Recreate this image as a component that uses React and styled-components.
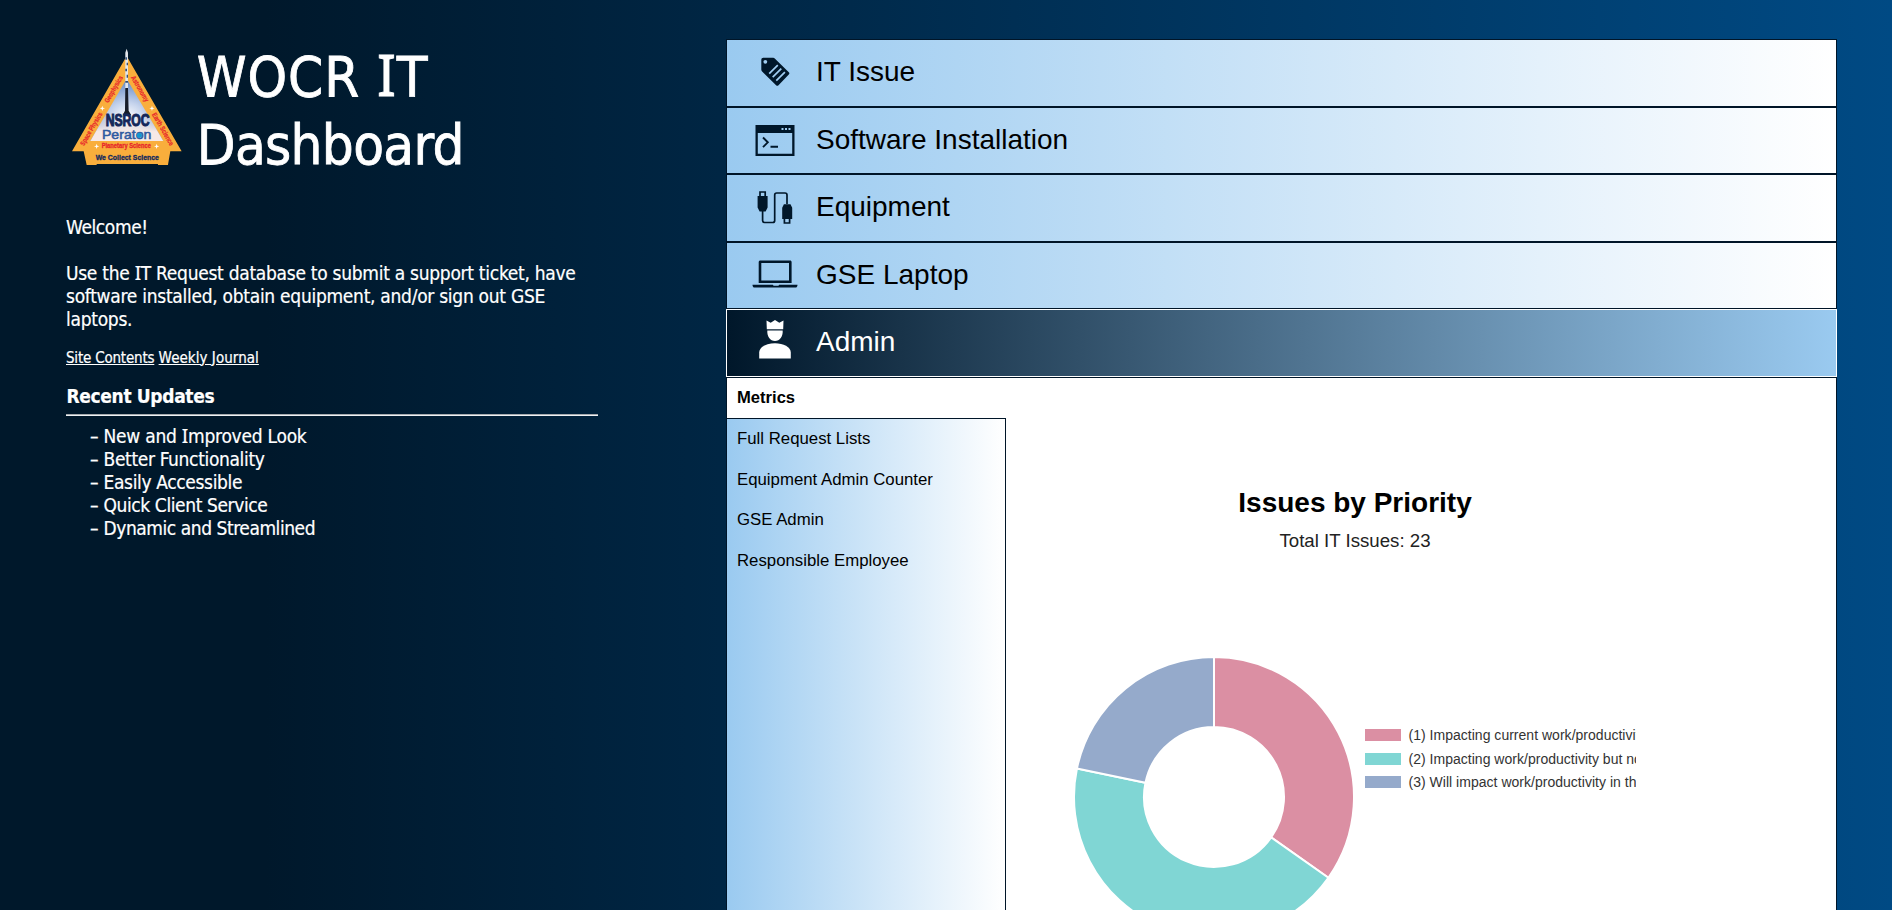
import React from 'react';
import styled, { createGlobalStyle } from 'styled-components';

const NAVY = '#00172a';
const SKY = '#9acaf0';

const GlobalStyle = createGlobalStyle`
  * { box-sizing: border-box; }
  body { margin: 0; overflow: hidden; background: ${NAVY}; }
`;

const Page = styled.div`
  display: flex;
  height: 910px;
  overflow: hidden;
  background: linear-gradient(to right, #00182b 14%, #004a84 100%);
  font-family: 'Liberation Sans', Arial, sans-serif;
`;

const Intro = styled.aside`
  width: 532px;
  margin-left: 66px;
  padding-top: 43px;
  color: #fff;
  font: 19px/23px 'DejaVu Sans Condensed', Tahoma, sans-serif;
  -webkit-text-stroke: 0.2px #fff;
`;

const Header = styled.header`
  display: flex;
  align-items: flex-start;
  height: 136px;
  margin-bottom: 37px;
`;

const Logo = styled.svg`
  flex: none;
  width: 113.3px;
  height: 122px;
  margin: 3px 13.5px 0 4px;
  -webkit-text-stroke: 0;
`;

const Title = styled.h1`
  margin: 0;
  font-size: 56px;
  line-height: 68px;
  font-weight: 400;
  -webkit-text-stroke: 0.8px #fff;
`;

const TitleLine = styled.span`
  display: block;
  white-space: nowrap;
  letter-spacing: ${(p) => p.$tracking}px;
`;

const BarredI = styled.span`
  font-family: 'Noto Sans', Tahoma, sans-serif;
  line-height: 0;
`;

const Paragraph = styled.p`
  margin: 0 0 ${(p) => p.$gap}px;
  letter-spacing: ${(p) => p.$tracking}px;
`;

const Links = styled.nav`
  height: 18px;
  margin-bottom: 18px;
  font-size: 15px;
  line-height: 18px;
`;

const TextLink = styled.a`
  color: #fff;
  letter-spacing: ${(p) => p.$tracking}px;
  text-decoration: underline;
`;

const SectionTitle = styled.h2`
  margin: 0;
  padding: 0 0 6px 0.5px;
  font-size: 19px;
  line-height: 23px;
  letter-spacing: -0.35px;
  border-bottom: 1px solid #a5a9ad;
`;

const Updates = styled.ul`
  margin: 0;
  padding: 9px 0 0 24px;
  list-style: none;
  border-top: 1px solid #eef1f4;
`;

const Update = styled.li`
  display: flex;
  letter-spacing: ${(p) => p.$tracking}px;
  white-space: nowrap;
`;

const Dash = styled.span`
  width: 13.5px;
`;

const Main = styled.main`
  display: flex;
  flex-direction: column;
  width: 1111px;
  margin: 39px 0 0 128px;
`;

const MenuItem = styled.button`
  display: flex;
  flex: none;
  align-items: center;
  width: 100%;
  height: 67.5px;
  padding: 0 0 1px 24px;
  border: 1px solid ${(p) => (p.$active ? '#fff' : '#001528')};
  background: ${(p) =>
    p.$active
      ? `linear-gradient(to right, #00172a, ${SKY})`
      : `linear-gradient(to right, ${SKY}, #fff)`};
  color: ${(p) => (p.$active ? '#fff' : '#000')};
  font: 28px 'Liberation Sans', Arial, sans-serif;
  text-align: left;
`;

const MenuIcon = styled.svg`
  width: 48px;
  height: 48px;
  margin-right: 17.5px;
  margin-left: -0.5px;
  color: ${(p) => (p.$active ? '#fff' : '#00172a')};
`;

const Panel = styled.section`
  display: flex;
  flex: 1;
  border: 1px solid #001528;
  border-bottom: 0;
  background: #fff;
`;

const SideNav = styled.nav`
  display: flex;
  flex-direction: column;
  width: 279px;
  font-size: 16.8px;
`;

const SideItem = styled.div`
  display: flex;
  align-items: center;
  flex: none;
  height: 40.7px;
  padding-left: 10px;
`;

const CurrentItem = styled(SideItem)`
  height: 40px;
  font-size: 16.6px;
  font-weight: 700;
`;

const SideList = styled.div`
  flex: 1;
  border: solid #001528;
  border-width: 1px 1px 0 0;
  background: linear-gradient(to right, ${SKY}, #fff);
`;

const Chart = styled.figure`
  width: 562px;
  margin: 0 0 0 68px;
  padding-top: 108px;
  overflow: hidden;
`;

const ChartTitle = styled.h3`
  margin: 0;
  font-size: 28px;
  line-height: 34px;
  text-align: center;
`;

const ChartTotal = styled.p`
  margin: 7.5px 0 0;
  color: #222;
  font-size: 18.67px;
  line-height: 28px;
  text-align: center;
`;

const ChartBody = styled.div`
  display: flex;
  align-items: flex-start;
  margin-top: 102px;
`;

const Donut = styled.svg`
  flex: none;
  width: 280px;
  height: 280px;
`;

const Legend = styled.ul`
  flex: none;
  margin: 66.5px 0 0 11px;
  padding: 0;
  list-style: none;
`;

const LegendItem = styled.li`
  display: flex;
  align-items: center;
  gap: 8px;
  height: 23.5px;
  color: #333;
  font-size: 14px;
  letter-spacing: 0.02px;
  white-space: nowrap;
`;

const Swatch = styled.span`
  width: 35.5px;
  height: 12px;
  background: ${(p) => p.$color};
`;

const slices = [
  { value: 8, color: '#db8fa3', label: '(1) Impacting current work/productivity' },
  { value: 10, color: '#80d6d4', label: '(2) Impacting work/productivity but not' },
  { value: 5, color: '#95aacb', label: '(3) Will impact work/productivity in the' },
];
const total = slices.reduce((sum, s) => sum + s.value, 0);

function point(fraction, radius) {
  const angle = fraction * 2 * Math.PI;
  return `${140 + radius * Math.sin(angle)} ${140 - radius * Math.cos(angle)}`;
}

function slicePath(start, end) {
  const large = end - start > 0.5 ? 1 : 0;
  return `M${point(start, 140)} A140 140 0 ${large} 1 ${point(end, 140)} L${point(end, 70)} A70 70 0 ${large} 0 ${point(start, 70)} Z`;
}

function IssuesDonut() {
  let sum = 0;
  return (
    <Donut viewBox="0 0 280 280">
      {slices.map((s) => {
        const start = sum / total;
        sum += s.value;
        return (
          <path key={s.label} d={slicePath(start, sum / total)} fill={s.color} stroke="#fff" strokeWidth="2" />
        );
      })}
    </Donut>
  );
}

const icons = {
  tag: (
    <g transform="translate(9.5 9)">
      <path
        d="M3 .8h9.2c1 0 1.6.2 2.3.9l13.8 13.5c.8.8.8 1.4 0 2.2L18 28.2c-.8.8-1.6.8-2.4 0L1.6 14.4C1 13.8.8 13.2.8 12.4V3C.8 1.500 1.500.8 3 .8z"
        fill="currentColor"
      />
      <circle cx="4.800" cy="4.800" r="1.9" fill="#a0cdf1" />
      <path d="M8.700 16.700l8.600-8.600M12.200 20.200l8.600-8.600M15.800 23.700l8.600-8.600" stroke="#a0cdf1" strokeWidth="1.700" />
    </g>
  ),
  terminal: (
    <g>
      <path d="M4.500 9h39v31h-39zM6.800 17v20.700h34.400V17z" fill="currentColor" fillRule="evenodd" />
      <path d="M30.500 12h2v2h-2zM34 12h2v2h-2zM37.500 12h2v2h-2z" fill="#a0cdf1" />
      <path d="M12 21.500l4.800 4.800-4.800 4.800M19.500 30.800h7.500" fill="none" stroke="currentColor" strokeWidth="1.900" />
    </g>
  ),
  cable: (
    <g fill="none" stroke="currentColor" strokeWidth="1.700">
      <path d="M11.600 28v9.500c0 1.200.8 2 2 2h8.100c1.200 0 2-.8 2-2V12c0-1.200.8-2 2-2h8.300c1.200 0 2 .8 2 2v9" />
      <path d="M9 13V9h5.200v4M33.400 36v4h5.200v-4" />
      <path d="M6.600 13h10v11.500l-2 4H8.600l-2-4zM31.200 36h10V24.800l-1.700-3.500h-6.600l-1.700 3.500z" fill="currentColor" stroke="none" />
    </g>
  ),
  laptop: (
    <g fill="currentColor">
      <path d="M9.500 9.500h29.500c1 0 1.600.6 1.600 1.600v21H7.700v-21c0-1 .7-1.600 1.800-1.600zM10.300 12v17.500H38V12z" fillRule="evenodd" />
      <path d="M1.500 33.700h20.300l.8 1h4.800l.8-1h18.300c0 1.800-.8 2.900-2 2.900H3.500c-1.200 0-2-1.100-2-2.900z" />
    </g>
  ),
  king: (
    <g fill="currentColor">
      <path d="M15.500 2.600l4.200 2.200L24 2l4.300 2.800 4.200-2.200-.3 8.700H15.800zM16.300 12.600h15.400c.3 6.200-2.800 10.500-7.700 10.500s-8-4.300-7.700-10.500z" />
      <path d="M8.200 40.500v-6c0-5.600 7.400-9.300 15.800-9.300s15.800 3.700 15.800 9.300v6z" />
    </g>
  ),
};

const menu = [
  { label: 'IT Issue', icon: 'tag' },
  { label: 'Software Installation', icon: 'terminal' },
  { label: 'Equipment', icon: 'cable' },
  { label: 'GSE Laptop', icon: 'laptop' },
  { label: 'Admin', icon: 'king', active: true },
];

const sideItems = ['Full Request Lists', 'Equipment Admin Counter', 'GSE Admin', 'Responsible Employee'];

function NsrocLogo() {
  const star = 'M0-8L2-2 8 0 2 2 0 8-2 2-8 0-2-2z';
  return (
    <Logo viewBox="60 50 340 366" fontFamily="'Liberation Sans', Arial, sans-serif" fontWeight="700" textAnchor="middle">
      <defs>
        <radialGradient id="sky" cx="50%" cy="62%" r="60%">
          <stop offset="0" stopColor="#fff" />
          <stop offset=".4" stopColor="#c5d3ec" />
          <stop offset="1" stopColor="#5f86c4" />
        </radialGradient>
        <linearGradient id="haze" x1="0" y1="0" x2="0" y2="1">
          <stop offset=".6" stopColor="#f3e6e4" stopOpacity="0" />
          <stop offset=".85" stopColor="#f6e9e6" />
        </linearGradient>
      </defs>
      <path d="M230 80L395 366H361L354 407H324V404H140V407H110L101 366H66z" fill="#f9ae3c" />
      <path d="M230 148L340 335H121z" fill="url(#sky)" />
      <path d="M230 148L340 335H121z" fill="url(#haze)" />
      <path d="M230 58l4 12v108h-8V70z" fill="#e4e7ec" />
      <path d="M226 84h5v7h-5zM230 100h4v8h-4zM226 118h5v8h-5zM230 136h4v9h-4zM226 155h8v5h-8z" fill="#2f4c77" />
      <path d="M226 176h8l2 68 8 14h-26l7-14z" fill="#171c28" />
      <text x="233" y="290" fontSize="47" fill="#14275a" stroke="#14275a" strokeWidth="3" textLength="132" lengthAdjust="spacingAndGlyphs">NSROC</text>
      <text x="230" y="329" fontSize="37" fontWeight="400" fill="#2e5aa0" stroke="#2e5aa0" strokeWidth="1.500" textLength="148" lengthAdjust="spacingAndGlyphs">Peraton</text>
      <circle cx="268" cy="318" r="8" fill="#1696cf" />
      <text x="229" y="357" fontSize="19" fill="#e8252b" stroke="#e8252b" strokeWidth=".8" textLength="148" lengthAdjust="spacingAndGlyphs">Planetary Science</text>
      <text x="232" y="392" fontSize="24" fill="#132a5e" stroke="#132a5e" strokeWidth="1" textLength="190" lengthAdjust="spacingAndGlyphs">We Collect Science</text>
      <g fontSize="21" fill="#e8252b" stroke="#e8252b" strokeWidth=".6">
        <text transform="translate(197 183) rotate(-60)" textLength="90" lengthAdjust="spacingAndGlyphs">Geophysics</text>
        <text transform="translate(130 302) rotate(-60)" textLength="112" lengthAdjust="spacingAndGlyphs">Space Physics</text>
        <text transform="translate(264 182) rotate(60)" textLength="86" lengthAdjust="spacingAndGlyphs">Astronomy</text>
        <text transform="translate(333 303) rotate(60)" textLength="110" lengthAdjust="spacingAndGlyphs">Earth Science</text>
      </g>
      <g fill="#fff">
        <path transform="translate(157 237)" d={star} />
        <path transform="translate(306 237)" d={star} />
        <path transform="translate(140 351)" d={star} />
        <path transform="translate(320 351)" d={star} />
      </g>
    </Logo>
  );
}

export default function App() {
  return (
    <>
      <GlobalStyle />
      <Page>
        <Intro>
          <Header>
            <NsrocLogo />
            <Title>
              <TitleLine $tracking={0.9}>WOCR <BarredI>I</BarredI>T</TitleLine>
              <TitleLine $tracking={-0.7}>Dashboard</TitleLine>
            </Title>
          </Header>
          <Paragraph $gap={23} $tracking={-0.4}>Welcome!</Paragraph>
          <Paragraph $gap={17.5} $tracking={-0.28}>
            Use the <BarredI>I</BarredI>T Request database to submit a support ticket, have software installed,
            obtain equipment, and/or sign out GSE laptops.
          </Paragraph>
          <Links>
            <TextLink $tracking={-0.2}>Site Contents</TextLink>{' '}
            <TextLink $tracking={0.05}>Weekly Journal</TextLink>
          </Links>
          <SectionTitle>Recent Updates</SectionTitle>
          <Updates>
            <Update $tracking={-0.25}><Dash>–</Dash><span>New and <BarredI>I</BarredI>mproved Look</span></Update>
            <Update $tracking={-0.35}><Dash>–</Dash>Better Functionality</Update>
            <Update $tracking={-0.35}><Dash>–</Dash>Easily Accessible</Update>
            <Update $tracking={-0.4}><Dash>–</Dash>Quick Client Service</Update>
            <Update $tracking={-0.45}><Dash>–</Dash>Dynamic and Streamlined</Update>
          </Updates>
        </Intro>
        <Main>
          {menu.map((item) => (
            <MenuItem key={item.label} $active={item.active}>
              <MenuIcon $active={item.active} viewBox="0 0 48 48">{icons[item.icon]}</MenuIcon>
              {item.label}
            </MenuItem>
          ))}
          <Panel>
            <SideNav>
              <CurrentItem>Metrics</CurrentItem>
              <SideList>
                {sideItems.map((label) => (
                  <SideItem key={label}>{label}</SideItem>
                ))}
              </SideList>
            </SideNav>
            <Chart>
              <ChartTitle>Issues by Priority</ChartTitle>
              <ChartTotal>Total IT Issues: {total}</ChartTotal>
              <ChartBody>
                <IssuesDonut />
                <Legend>
                  {slices.map((s) => (
                    <LegendItem key={s.label}>
                      <Swatch $color={s.color} />
                      {s.label}
                    </LegendItem>
                  ))}
                </Legend>
              </ChartBody>
            </Chart>
          </Panel>
        </Main>
      </Page>
    </>
  );
}
